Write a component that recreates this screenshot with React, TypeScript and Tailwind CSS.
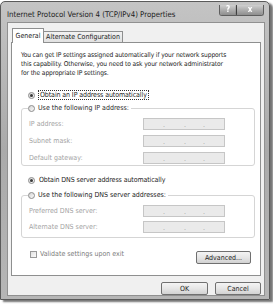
const font = "font-['DejaVu_Sans_Condensed','DejaVu_Sans',sans-serif]";

const Radio = ({ checked }: { checked?: boolean }) => (
  <span className="flex h-[7px] w-[7px] shrink-0 items-center justify-center rounded-full border border-[#8c8c8c] bg-linear-to-br from-[#d4d4d4] to-[#fafafa]">
    {checked && <span className="h-[3px] w-[3px] rounded-full bg-[#3a3a3a]" />}
  </span>
);

const IpBox = () => (
  <div className="flex h-[12px] w-[82px] items-center border border-[#c6c6c6] bg-[#eaeaea] pt-[2px] text-[7px] leading-none text-[#a5a5a5]">
    <span className="ml-[19px]">.</span>
    <span className="ml-[19px]">.</span>
    <span className="ml-[17px]">.</span>
  </div>
);

const IpRow = ({ label }: { label: string }) => (
  <div className="flex h-[12px] items-center">
    <span className="w-[114px] text-[#a3a3a3]">{label}</span>
    <IpBox />
  </div>
);

const Button = ({ label, w }: { label: string; w: string }) => (
  <div
    className={`flex h-[13px] items-center justify-center rounded-[2px] border border-[#707070] bg-linear-to-b from-[#f4f4f4] via-[#e6e6e6] to-[#d2d2d2] text-[#222] ${w}`}
  >
    {label}
  </div>
);

export default function App() {
  return (
    <div className={`h-[307px] w-[273px] bg-white text-[7px] leading-[10px] text-[#222] ${font}`}>
      <div className="mt-[1px] flex h-[299px] w-[270px] flex-col rounded-t-[5px] border border-[#5a5a5a] bg-linear-to-b from-[#c4c4c4] via-[#aaaaaa] to-[#b6b6b6] shadow-[3px_2px_2px_rgba(0,0,0,0.55)]">
        <div className="flex h-[20px] shrink-0">
          <span className="ml-[6px] mt-[8px] text-[7.8px] text-[#1c1c1c]">
            Internet Protocol Version 4 (TCP/IPv4) Properties
          </span>
          <div className="ml-auto mr-[5px] mt-[3px] flex h-[11px] overflow-hidden rounded-b-[3px] border border-t-0 border-[#5e5e5e]">
            <div className="flex w-[17px] items-center justify-center border-r border-[#5e5e5e] bg-linear-to-b from-[#cfcfcf] to-[#8e8e8e] text-[8px] font-bold text-white drop-shadow-[0_0_1px_#000]">
              ?
            </div>
            <div className="flex w-[26px] items-center justify-center bg-linear-to-b from-[#cfcfcf] to-[#8e8e8e] text-[8px] font-bold text-white drop-shadow-[0_0_1px_#000]">
              x
            </div>
          </div>
        </div>

        <div className="mb-[3px] ml-[6px] mr-[4px] flex flex-1 flex-col border border-[#909090] bg-[#f0f0f0] px-[3px] pt-[5px]">
          <div className="flex items-end pl-[1px]">
            <div className="relative z-10 -mb-px flex h-[15px] w-[32px] items-center justify-center border border-b-0 border-[#8e8f8f] bg-white">
              General
            </div>
            <div className="flex h-[11px] w-[79px] items-center justify-center border border-b-0 border-l-0 border-[#8e8f8f] bg-linear-to-b from-[#f2f2f2] to-[#e1e1e1]">
              Alternate Configuration
            </div>
          </div>

          <div className="flex h-[234px] flex-col border border-[#8e8f8f] bg-white">
            <p className="pl-[9px] pt-[8px] text-[6.6px] leading-[9px] tracking-[-0.1px]">
              You can get IP settings assigned automatically if your network supports
              <br />
              this capability. Otherwise, you need to ask your network administrator
              <br />
              for the appropriate IP settings.
            </p>

            <div className="ml-[16px] mt-[12px] flex h-[10px] items-center gap-[3px]">
              <Radio checked />
              <span className="border border-dotted border-[#333] px-[1px] leading-[8px] tracking-[-0.1px]">
                Obtain an IP address automatically
              </span>
            </div>

            <fieldset className="ml-[9px] mt-[3px] w-[234px] rounded-[3px] border border-[#d5d5d5] px-[6px] pb-[1px]">
              <legend className="flex h-[10px] items-center gap-[3px] pr-[2px] text-[#2a2a2a]">
                <Radio />
                Use the following IP address:
              </legend>
              <div className="mt-[5px] flex flex-col gap-[5px] pl-[1px]">
                <IpRow label="IP address:" />
                <IpRow label="Subnet mask:" />
                <IpRow label="Default gateway:" />
              </div>
            </fieldset>

            <div className="ml-[16px] mt-[9px] flex h-[10px] items-center gap-[4px]">
              <Radio checked />
              <span className="tracking-[-0.1px]">Obtain DNS server address automatically</span>
            </div>

            <fieldset className="ml-[9px] mt-[5px] w-[234px] rounded-[3px] border border-[#d5d5d5] px-[6px] pb-[4px]">
              <legend className="flex h-[10px] items-center gap-[3px] pr-[2px]">
                <Radio />
                Use the following DNS server addresses:
              </legend>
              <div className="mt-[5px] flex flex-col gap-[4px] pl-[1px]">
                <IpRow label="Preferred DNS server:" />
                <IpRow label="Alternate DNS server:" />
              </div>
            </fieldset>

            <div className="mt-[11px] flex items-start pr-[9px]">
              <div className="ml-[18px] flex h-[10px] items-center gap-[3px] text-[#7c7c7c]">
                <span className="h-[7px] w-[7px] border border-[#9a9a9a] bg-linear-to-br from-[#e2e2e2] to-[#fbfbfb]" />
                <span>Validate settings upon exit</span>
              </div>
              <div className="ml-auto mt-[2px]">
                <Button label="Advanced..." w="w-[55px]" />
              </div>
            </div>
          </div>

          <div className="mt-[6px] flex justify-end gap-[7px]">
            <Button label="OK" w="w-[47px]" />
            <Button label="Cancel" w="w-[46px]" />
          </div>
        </div>
      </div>
    </div>
  );
}
